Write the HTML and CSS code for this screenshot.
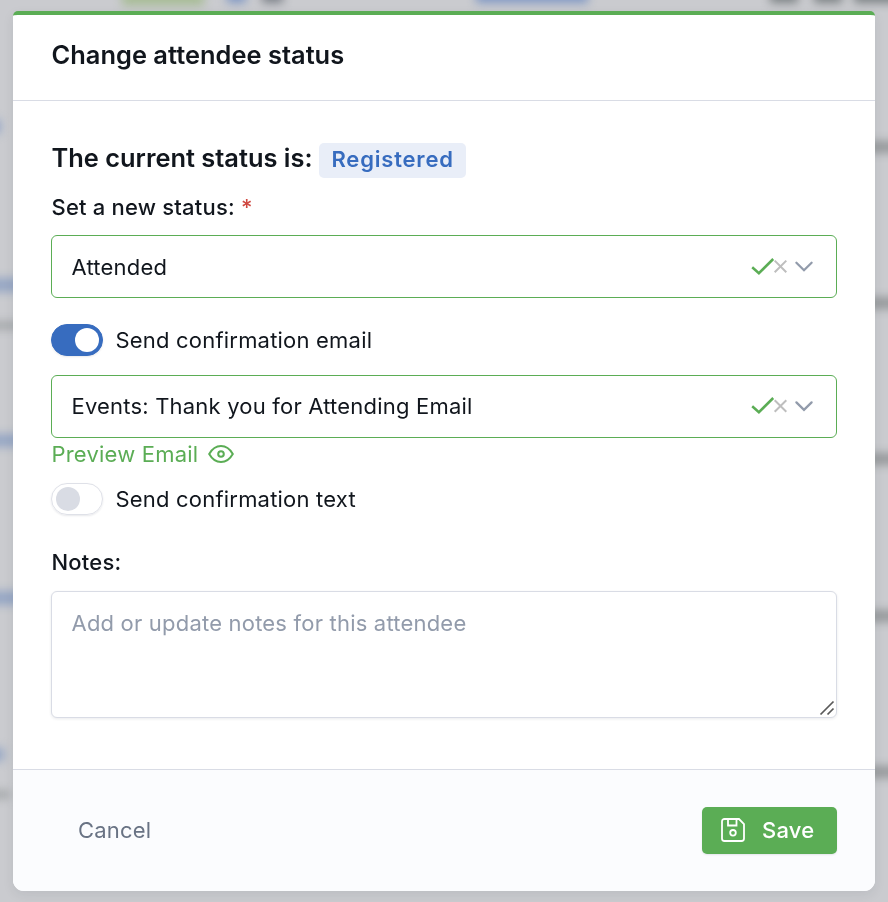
FILE: index.html
```
<!DOCTYPE html>
<html lang="en">
<head>
  <meta charset="UTF-8">
  <meta name="viewport" content="width=device-width, initial-scale=1.0">
  <title>Change attendee status</title>
  <link rel="stylesheet" href="styles.css">
</head>
<body>
  <!-- attendee list behind the modal -->
  <svg class="backdrop" viewBox="0 0 888 902" aria-hidden="true">
    <g class="backdrop-text">
      <rect x="122" y="-12" width="82" height="18" fill="#a9bd98"/>
      <rect x="227" y="-10" width="19" height="13" fill="#8098c4"/>
      <rect x="262" y="-10" width="21" height="13" fill="#7c8188"/>
      <rect x="476" y="-10" width="112" height="13" fill="#8098c4"/>
      <rect x="770" y="-10" width="28" height="13" fill="#7c8284"/>
      <rect x="814" y="-10" width="28" height="13" fill="#7c8284"/>
      <rect x="854" y="-10" width="50" height="13" fill="#7c8284"/>
      <rect x="-20" y="120" width="20" height="13" fill="#8ba0c6"/>
      <rect x="-20" y="278" width="50" height="14" fill="#95a6c4"/>
      <rect x="-20" y="322" width="50" height="7" fill="#9ea2a4"/>
      <rect x="-20" y="434" width="50" height="13" fill="#95a6c4"/>
      <rect x="-20" y="591" width="50" height="14" fill="#95a6c4"/>
      <rect x="-20" y="748" width="24" height="13" fill="#95a6c4"/>
      <rect x="-20" y="791" width="30" height="7" fill="#9ea2a4"/>
      <rect x="865" y="141" width="50" height="12" fill="#96999b"/>
      <rect x="865" y="297" width="50" height="12" fill="#96999b"/>
      <rect x="865" y="453" width="50" height="12" fill="#96999b"/>
      <rect x="865" y="610" width="50" height="12" fill="#96999b"/>
      <rect x="865" y="766" width="50" height="12" fill="#96999b"/>
    </g>
  </svg>

  <form class="modal">
    <div class="modal-header">
      <h2>Change attendee status</h2>
    </div>

    <div class="modal-body">
      <h3 class="current">The current status is: <span class="badge">Registered</span></h3>

      <div class="label">Set a new status: <span class="required">*</span></div>
      <div class="select">
        <span>Attended</span>
        <svg class="select-icons" width="64" height="24" viewBox="0 0 64 24">
          <path class="check" d="M2.2 13.2L8.9 19.2L23.2 5"/>
          <path class="clear" d="M24.7 6.6L36.3 18.2M36.3 6.6L24.7 18.2"/>
          <path class="arrow" d="M46.4 8.8L54 16.2L61.6 8.8"/>
        </svg>
      </div>

      <div class="switch-row email">
        <span class="switch on"></span>
        <span>Send confirmation email</span>
      </div>
      <div class="select template">
        <span>Events: Thank you for Attending Email</span>
        <svg class="select-icons" width="64" height="24" viewBox="0 0 64 24">
          <path class="check" d="M2.2 13.2L8.9 19.2L23.2 5"/>
          <path class="clear" d="M24.7 7.2L36.3 18.8M36.3 7.2L24.7 18.8"/>
          <path class="arrow" d="M46.4 9.4L54 16.8L61.6 9.4"/>
        </svg>
      </div>
      <a class="preview">Preview Email
        <svg width="26" height="20" viewBox="0 0 26 20">
          <path d="M1.2 10C4.2 4.7 8.2 2 13 2s8.8 2.7 11.8 8C21.8 15.3 17.8 18 13 18S4.2 15.3 1.2 10z"/>
          <circle cx="13" cy="10" r="2.8"/>
        </svg>
      </a>

      <div class="switch-row text">
        <span class="switch"></span>
        <span>Send confirmation text</span>
      </div>

      <label class="label notes-label" for="notes">Notes:</label>
      <div class="notes-wrap">
        <textarea id="notes" placeholder="Add or update notes for this attendee"></textarea>
        <svg class="grip" width="16" height="16" viewBox="0 0 16 16">
          <path d="M1.5 14.5L14.5 1.5M8.5 14.5L14.5 8.5"/>
        </svg>
      </div>
    </div>

    <div class="modal-footer">
      <button type="button" class="cancel">Cancel</button>
      <button type="button" class="save">
        <svg width="24" height="24" viewBox="0 0 24 24">
          <path d="M3.5 1H18l5 5v14.5a2.5 2.5 0 0 1-2.5 2.5h-17A2.5 2.5 0 0 1 1 20.5v-17A2.5 2.5 0 0 1 3.5 1z"/>
          <path d="M7 1v6.5h8.5V1"/>
          <circle cx="12" cy="14.8" r="2.8"/>
        </svg>
        <span>Save</span>
      </button>
    </div>
  </form>
</body>
</html>
```

FILE: styles.css
```
* { box-sizing: border-box; }
body { margin: 0; padding: 11px 13px; height: 902px; overflow: hidden; background: #cacbcf; color: #11161d; font-family: Inter, sans-serif; font-size: 22px; letter-spacing: 0.2px; }
h2, h3 { margin: 0; font-weight: 600; font-size: 25.4px; letter-spacing: 0; }

.backdrop { position: fixed; top: 0; left: 0; width: 888px; height: 902px; }
.backdrop-text { filter: blur(5px); }

.modal { position: relative; display: flex; flex-direction: column; height: 880px; background: #fff; border-top: 4px solid #5bad55; border-radius: 5px 5px 11px 11px; box-shadow: 0 4px 12px rgba(30, 40, 50, 0.08); }
.modal-header { height: 86px; padding: 0 38.5px; border-bottom: 1px solid #d9dce5; }
.modal-header h2 { line-height: 79px; letter-spacing: 0.03px; }
.modal-body { flex: 1; padding: 42px 38px 0; }

.current { display: flex; align-items: flex-start; gap: 7px; height: 35px; padding-left: 0.5px; line-height: 29px; }
.badge { height: 35px; padding: 0 12px; border-radius: 5px; background: #e9eef8; color: #376cbf; font-size: 22px; line-height: 33px; letter-spacing: 0.8px; }
.label { display: block; height: 30px; margin: 14px 0 13px; padding-left: 0.5px; font-weight: 500; line-height: 30px; }
.required { color: #cf4840; }

.select { display: flex; align-items: center; justify-content: space-between; height: 63px; padding: 0 22px 0 19.5px; border: 1px solid #5bad55; border-radius: 6px; }
.select.template { padding-bottom: 1.5px; }
.select-icons { margin-bottom: 2px; fill: none; stroke-width: 2; }
.check { stroke: #5bad55; stroke-width: 2.5; }
.clear { stroke: #bebebe; }
.arrow { stroke: #929bab; stroke-width: 2.3; stroke-linecap: round; }

.switch-row { display: flex; align-items: center; gap: 12.5px; height: 32px; }
.email { margin: 26px 0 19px; }
.text { margin: 13px 0 32px; }
.switch { width: 52px; height: 32px; padding: 3px 4px; border: 1px solid #dfe1e8; border-radius: 16px; box-shadow: 0 1px 2px rgba(20, 30, 60, 0.1); }
.switch::before { content: ""; display: block; width: 24px; height: 24px; border-radius: 50%; background: #d9dce4; }
.switch.on { border-color: #376cbf; background: #376cbf; }
.switch.on::before { margin-left: 19px; background: #fff; }

.preview { display: flex; align-items: center; gap: 9.5px; height: 32px; padding-left: 0.5px; color: #5bad55; }
.preview svg { fill: none; stroke: #5bad55; stroke-width: 2; }

.notes-label { margin: 0 0 14px; }
.notes-wrap { position: relative; height: 127px; }
textarea { display: block; width: 100%; height: 127px; padding: 18px 19.5px; border: 1px solid #d9dce5; border-radius: 6px; box-shadow: 0 1px 3px rgba(20, 30, 60, 0.09); font: inherit; letter-spacing: inherit; resize: none; }
textarea::placeholder { color: #929bab; }
.grip { position: absolute; right: 2px; bottom: 2px; fill: none; stroke: #5a5a5a; stroke-width: 1.7; }

.modal-footer { display: flex; justify-content: space-between; height: 122px; padding: 37px 38px 0 65px; border-top: 1px solid #d9dce5; border-radius: 0 0 11px 11px; background: #fbfcfe; }
button { height: 47px; padding: 0 0 2px; border: 0; background: none; font: inherit; letter-spacing: inherit; }
.cancel { color: #697384; }
.save { display: flex; align-items: center; gap: 17px; width: 135px; padding-left: 19px; border-radius: 5px; background: #5bad55; color: #fff; font-weight: 500; box-shadow: 0 1px 2px rgba(20, 30, 60, 0.1); }
.save svg { fill: none; stroke: #fff; stroke-width: 1.8; }
```
